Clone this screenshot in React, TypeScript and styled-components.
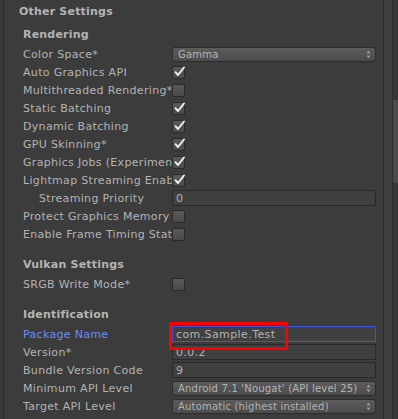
import React from 'react';
import styled, { createGlobalStyle } from 'styled-components';

const GlobalStyle = createGlobalStyle`
  html, body {
    margin: 0;
    padding: 0;
    background: #3c3c3c;
  }
`;

const Window = styled.div`
  width: 398px;
  height: 419px;
  overflow: hidden;
  display: flex;
  background: #3c3c3c;
  font-family: 'DejaVu Sans', 'Liberation Sans', sans-serif;
  font-size: 11px;
  color: #b4b4b4;
`;

const Gutter = styled.div`
  width: 3px;
  flex-shrink: 0;
  background: #3a3a3a;
  border-right: 1px solid #2c2c2c;
`;

const Content = styled.div`
  flex: 1;
  padding: 2px 7px 0 15px;
  position: relative;
`;

const ScrollArea = styled.div`
  width: 14px;
  flex-shrink: 0;
  display: flex;
  border-left: 1px solid #2e2e2e;
`;

const Track = styled.div`
  width: 8px;
  background: #404040;
  border-right: 1px solid #2e2e2e;
`;

const ThumbColumn = styled.div`
  flex: 1;
  background: #363636;
  display: flex;
  flex-direction: column;
  padding-top: 100px;
`;

const Thumb = styled.div`
  height: 83px;
  background: #4c4c4c;
  border-radius: 0 0 0 4px;
`;

const Title = styled.div`
  height: 18px;
  line-height: 20px;
  font-weight: bold;
  margin-bottom: 5px;
  letter-spacing: 0.2px;
`;

const Section = styled.div<{ $gap?: number }>`
  padding-left: 4px;
  margin-top: ${(p) => p.$gap ?? 0}px;
`;

const Heading = styled.div`
  height: 18px;
  line-height: 20px;
  font-weight: bold;
  margin-bottom: 2px;
  letter-spacing: 0.2px;
`;

const Row = styled.div`
  display: grid;
  grid-template-columns: 149px 204px;
  height: 18px;
  align-items: center;
`;

const Label = styled.div<{ $indent?: boolean; $active?: boolean }>`
  height: 18px;
  white-space: nowrap;
  overflow: hidden;
  letter-spacing: 0.32px;
  padding-left: ${(p) => (p.$indent ? 16 : 0)}px;
  color: ${(p) => (p.$active ? '#6c8ef2' : '#b4b4b4')};
  line-height: 20px;
`;

const Box = styled.div`
  width: 11px;
  height: 11px;
  border: 1px solid #2a2a2a;
  border-radius: 2px;
  background: linear-gradient(#5a5a5a, #4a4a4a);
  position: relative;
  margin-top: 1px;
`;

const Tick = styled.svg`
  position: absolute;
  left: 0;
  top: -2px;
`;

const Dropdown = styled.div`
  height: 13px;
  border: 1px solid #2c2c2c;
  border-radius: 3px;
  background: linear-gradient(#5c5c5c, #4b4b4b);
  display: flex;
  align-items: center;
  justify-content: space-between;
  padding: 0 4px 0 5px;
  color: #b4b4b4;
  font-size: 10px;
  letter-spacing: 0.2px;
  line-height: 13px;
  white-space: nowrap;
`;

const Field = styled.div<{ $focus?: boolean }>`
  height: 14px;
  border: 1px solid ${(p) => (p.$focus ? '#3b55d4' : '#2a2a2a')};
  background: #404040;
  padding-left: 3px;
  line-height: 15px;
  letter-spacing: 0.4px;
  color: #b4b4b4;
  white-space: nowrap;
  overflow: hidden;
`;

const Highlight = styled.div`
  position: absolute;
  left: 165px;
  top: 322px;
  width: 113px;
  height: 22px;
  border: 3px solid #ff0000;
  pointer-events: none;
`;

const Check = ({ on }: { on?: boolean }) => (
  <Box>
    {on && (
      <Tick width="13" height="13" viewBox="0 0 13 13">
        <path
          d="M2.5 7.2 L5 10 L11 2.5"
          fill="none"
          stroke="#eeeeee"
          strokeWidth="2"
          strokeLinecap="round"
          strokeLinejoin="round"
        />
      </Tick>
    )}
  </Box>
);

const Arrows = () => (
  <svg width="5" height="9" viewBox="0 0 5 9">
    <path d="M2.5 0.5 L4.5 3.5 H0.5 Z M2.5 8.5 L4.5 5.5 H0.5 Z" fill="#9a9a9a" />
  </svg>
);

const Select = ({ value }: { value: string }) => (
  <Dropdown>
    <span>{value}</span>
    <Arrows />
  </Dropdown>
);

const rendering: [string, boolean][] = [
  ['Auto Graphics API', true],
  ['Multithreaded Rendering*', false],
  ['Static Batching', true],
  ['Dynamic Batching', true],
  ['GPU Skinning*', true],
  ['Graphics Jobs (Experimental)*', true],
  ['Lightmap Streaming Enabled', true],
];

const App: React.FC = () => {
  return (
    <Window>
      <GlobalStyle />
      <Gutter />
      <Content>
        <Title>Other Settings</Title>

        <Section>
          <Heading>Rendering</Heading>
          <Row>
            <Label>Color Space*</Label>
            <Select value="Gamma" />
          </Row>
          {rendering.map(([name, on]) => (
            <Row key={name}>
              <Label>{name}</Label>
              <Check on={on} />
            </Row>
          ))}
          <Row>
            <Label $indent>Streaming Priority</Label>
            <Field>0</Field>
          </Row>
          <Row>
            <Label>Protect Graphics Memory</Label>
            <Check />
          </Row>
          <Row>
            <Label>Enable Frame Timing Stats</Label>
            <Check />
          </Row>
        </Section>

        <Section $gap={12}>
          <Heading>Vulkan Settings</Heading>
          <Row>
            <Label>SRGB Write Mode*</Label>
            <Check />
          </Row>
        </Section>

        <Section $gap={12}>
          <Heading>Identification</Heading>
          <Row>
            <Label $active>Package Name</Label>
            <Field $focus>com.Sample.Test</Field>
          </Row>
          <Row>
            <Label>Version*</Label>
            <Field>0.0.2</Field>
          </Row>
          <Row>
            <Label>Bundle Version Code</Label>
            <Field>9</Field>
          </Row>
          <Row>
            <Label>Minimum API Level</Label>
            <Select value="Android 7.1 'Nougat' (API level 25)" />
          </Row>
          <Row>
            <Label>Target API Level</Label>
            <Select value="Automatic (highest installed)" />
          </Row>
        </Section>

        <Highlight />
      </Content>
      <ScrollArea>
        <Track />
        <ThumbColumn>
          <Thumb />
        </ThumbColumn>
      </ScrollArea>
    </Window>
  );
};

export default App;
